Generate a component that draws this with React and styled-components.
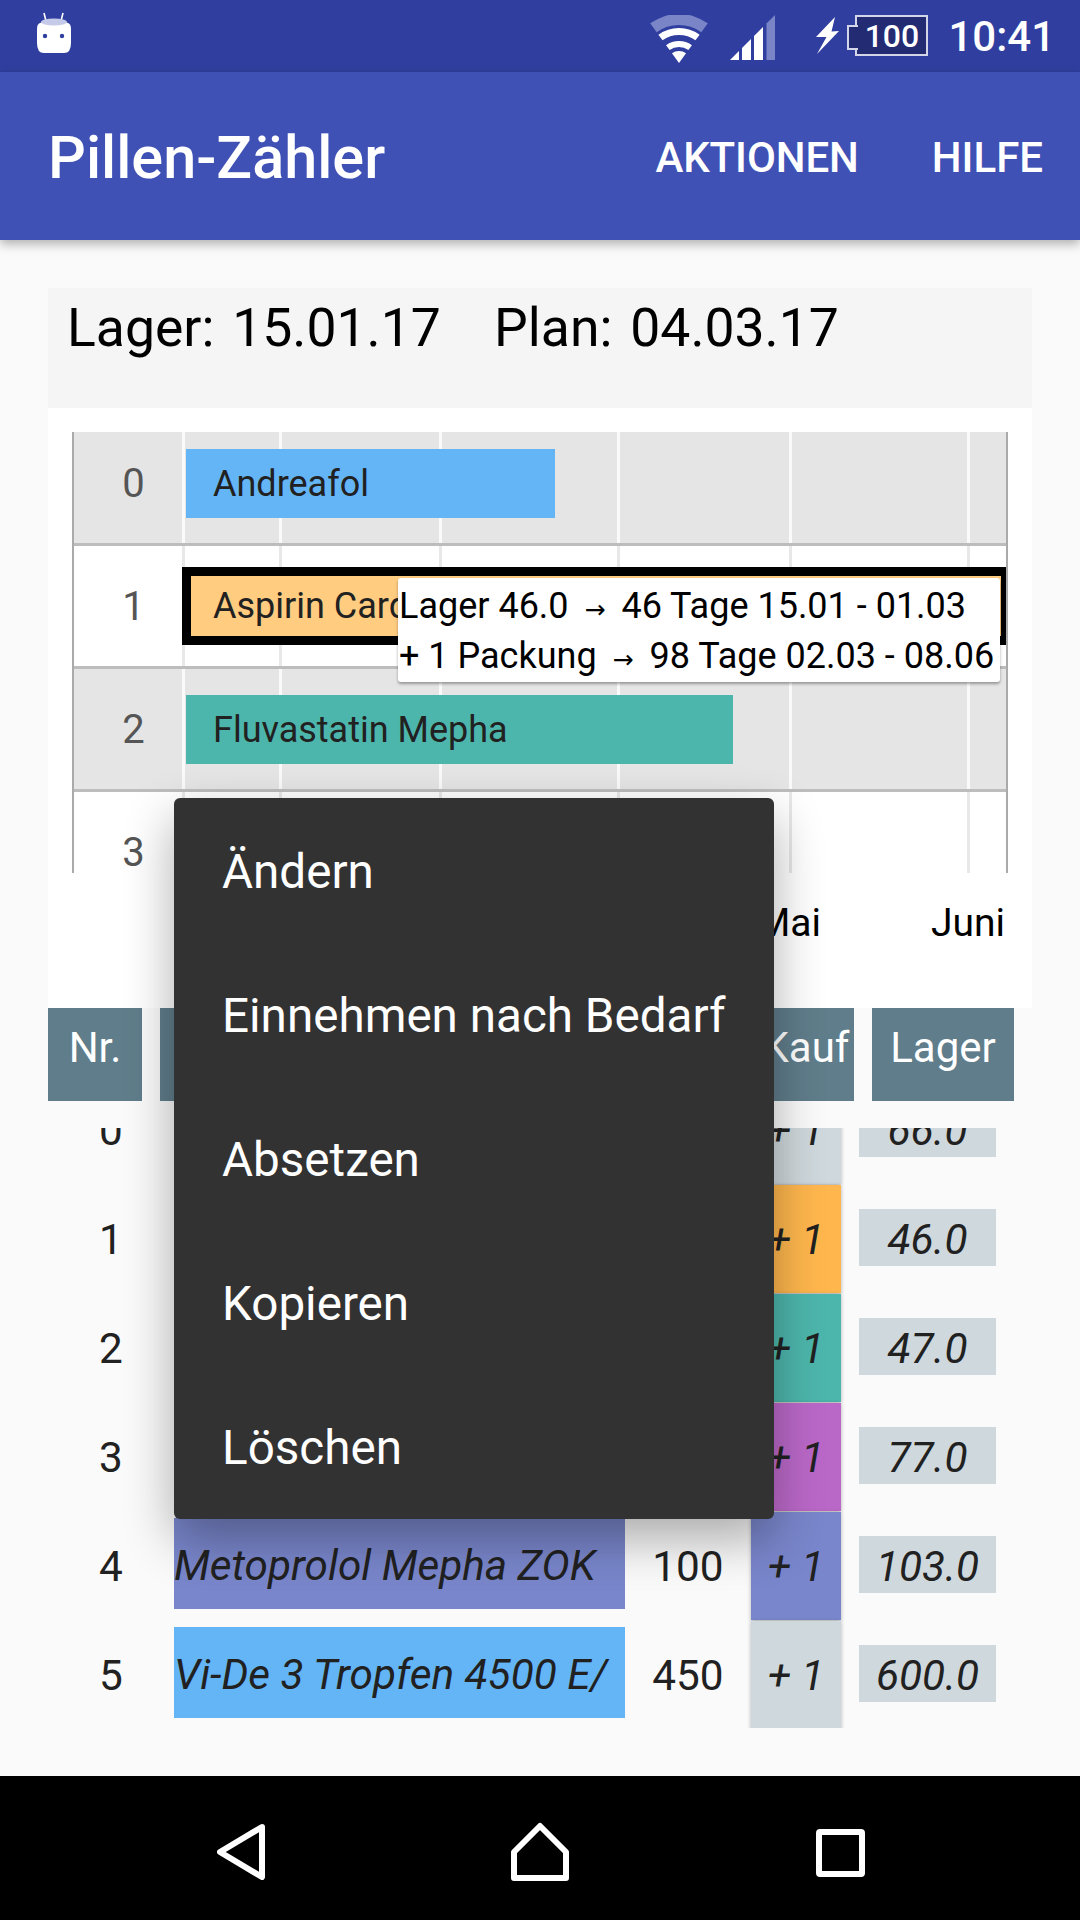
import React from "react";
import styled, { createGlobalStyle } from "styled-components";

const GlobalStyle = createGlobalStyle`
  html, body { margin: 0; padding: 0; background: #fafafa; }
  * { box-sizing: border-box; }
`;

const Page = styled.div`
  position: relative;
  width: 1080px;
  height: 1920px;
  overflow: hidden;
  display: flex;
  flex-direction: column;
  background: #fafafa;
  font-family: Roboto, "Liberation Sans", sans-serif;
  color: #212121;
`;

/* status bar */
const StatusBar = styled.div`
  flex: 0 0 72px;
  background: #303f9f;
  display: flex;
  align-items: flex-start;
  padding: 12px 25px 0 37px;
  color: #fff;
`;
const StatusSpacer = styled.div`flex: 1;`;
const RobotIcon = styled.svg`display: block; width: 34px; height: 41px;`;
const WifiIcon = styled.svg`display: block; width: 58px; height: 48px; margin-top: 3px;`;
const SignalIcon = styled.svg`display: block; width: 45px; height: 45px; margin: 3px 0 0 22px;`;
const BoltIcon = styled.svg`display: block; width: 24px; height: 37px; margin: 5px 0 0 41px;`;
const Battery = styled.div`
  position: relative;
  width: 73px;
  height: 41px;
  margin: 3px 0 0 15px;
  background: #232b73;
  border: 2px solid #d3d6e8;
  display: flex;
  align-items: center;
  justify-content: center;
  font-size: 32px;
  font-weight: 500;
  line-height: 1;
  padding-top: 1px;
  &::before {
    content: "";
    position: absolute;
    left: -10px;
    top: 8px;
    width: 9px;
    height: 21px;
    background: #232b73;
    border: 2px solid #d3d6e8;
    border-right: 0;
  }
`;
const Clock = styled.div`
  margin: 5px 0 0 20px;
  font-size: 42px;
  font-weight: 500;
  line-height: 40px;
`;

/* app bar */
const AppBar = styled.div`
  position: relative;
  z-index: 2;
  flex: 0 0 168px;
  background: #3f51b5;
  display: flex;
  align-items: center;
  padding: 5px 37px 0 48px;
  color: #fff;
  box-shadow: 0 4px 10px rgba(0, 0, 0, 0.3);
`;
const Title = styled.div`
  flex: 1;
  font-size: 59.4px;
  font-weight: 500;
  line-height: 1;
`;
const BarAction = styled.div`
  font-size: 42px;
  font-weight: 500;
  line-height: 1;
  margin: -2px 0 0 73px;
  letter-spacing: ${(p) => (p.$tight ? "-0.1px" : "0")};
`;

/* main */
const Main = styled.div`
  flex: 1;
  padding: 48px 48px 0;
  display: flex;
  flex-direction: column;
`;
const InfoPanel = styled.div`
  flex: 0 0 120px;
  background: #f5f5f5;
  padding: 5px 19px 0;
  font-size: 53.5px;
  word-spacing: 4.5px;
  line-height: 70px;
  color: #000;
  white-space: pre;
`;
const ChartPanel = styled.div`
  flex: 0 0 600px;
  background: #fff;
  padding: 24px 24px 0;
`;
const Canvas = styled.div`
  height: 441px;
  overflow: hidden;
  border-left: 2px solid #aaa;
  border-right: 2px solid #aaa;
`;
const gridX = [108, 205, 365, 543, 715, 893];
const gridLines = (color) =>
  gridX.map((x) => `linear-gradient(${color}, ${color}) ${x}px 0 / 3px 100% no-repeat`).join(", ");
const ChartRow = styled.div`
  height: 123px;
  display: grid;
  grid-template-columns: 112px 1fr;
  align-items: center;
  background: ${(p) => gridLines(p.$shaded ? "#fafafa" : "#e8e8e8")}, ${(p) => (p.$shaded ? "#e5e5e5" : "#fff")};
  border-bottom: 3px solid #bdbdbd;
  &:first-child { margin-top: -9px; }
`;
const ChartLabel = styled.div`
  padding-left: 7px;
  padding-top: 1px;
  text-align: center;
  font-size: 40px;
  color: #555;
`;
const Bar = styled.div`
  height: 69px;
  display: flex;
  align-items: center;
  padding: 1px 0 0 27px;
  font-size: 36px;
  background: ${(p) => p.$color};
  color: #212121;
  white-space: nowrap;
  overflow: hidden;
`;
const SelectedBar = styled.div`
  height: 78px;
  margin-left: -4px;
  padding: 9px 5px 9px 9px;
  background: #000;
`;
const SelectedFill = styled.div`
  height: 60px;
  display: flex;
  align-items: center;
  padding-left: 22px;
  font-size: 36px;
  background: ${(p) => p.$color};
  color: #212121;
  white-space: nowrap;
  overflow: hidden;
`;
const Axis = styled.div`
  display: flex;
  justify-content: flex-end;
  gap: 110px;
  padding: 27px 3px 0 0;
  font-size: 39px;
  line-height: 46px;
  color: #000;
`;

/* table */
const TableHead = styled.div`
  display: flex;
  gap: 18px;
  height: 93px;
`;
const HeadCell = styled.div`
  flex: 0 0 ${(p) => p.$w}px;
  background: #607d8b;
  color: #fff;
  font-size: 42px;
  display: flex;
  align-items: center;
  justify-content: center;
  padding-bottom: 14px;
  white-space: nowrap;
  overflow: hidden;
`;
const TableViewport = styled.div`
  height: 600px;
  margin: 27px 0 0 0;
  overflow: hidden;
`;
const TableRows = styled.div`
  margin-top: -53px;
`;
const TableRow = styled.div`
  height: 109px;
  display: grid;
  grid-template-columns: 126px 451px 126px 90px 137px;
  align-items: center;
  font-size: 42.3px;
`;
const NrCell = styled.div`
  text-align: center;
  padding-top: 2px;
`;
const NameCell = styled.div`
  height: 91px;
  margin-top: -4px;
  padding-top: 3px;
  display: flex;
  align-items: center;
  font-style: italic;
  white-space: nowrap;
  overflow: hidden;
  background: ${(p) => p.$color};
`;
const QtyCell = styled.div`
  text-align: center;
  padding-top: 2px;
`;
const KaufButton = styled.div`
  height: 108px;
  display: flex;
  align-items: center;
  justify-content: center;
  padding-top: 2px;
  font-style: italic;
  background: ${(p) => p.$color};
  box-shadow: 0 1px 4px rgba(0, 0, 0, 0.3);
`;
const StockCell = styled.div`
  height: 57px;
  margin: -2px 0 0 18px;
  padding-top: 4px;
  width: 137px;
  display: flex;
  align-items: center;
  justify-content: center;
  font-style: italic;
  background: #cfd8dc;
`;

/* nav bar */
const NavBar = styled.div`
  flex: 0 0 144px;
  background: #000;
  display: grid;
  grid-template-columns: 217px 48px 246px 58px 247px 49px;
  padding-top: 46px;
`;
const NavIcon = styled.svg`
  display: block;
  grid-column: ${(p) => p.$col};
  margin-top: ${(p) => p.$top || 0}px;
`;

/* overlays */
const Tooltip = styled.div`
  position: absolute;
  left: 398px;
  top: 578px;
  width: 602px;
  height: 104px;
  padding: 3px 0 0 1px;
  background: #fff;
  border-radius: 3px;
  box-shadow: 0 2px 3px rgba(0, 0, 0, 0.35);
  font-size: 36px;
  line-height: 50px;
  color: #000;
  white-space: pre;
`;
const Arrow = styled.span`
  font-family: "DejaVu Sans", sans-serif;
  font-size: 25px;
  line-height: 0;
  margin: 0 7px;
`;
const Menu = styled.div`
  position: absolute;
  left: 174px;
  top: 798px;
  width: 600px;
  height: 721px;
  background: #323232;
  border-radius: 6px;
  box-shadow: 0 20px 50px rgba(0, 0, 0, 0.32);
  color: #fff;
  display: flex;
  flex-direction: column;
`;
const MenuItem = styled.div`
  flex: 0 0 144px;
  display: flex;
  align-items: center;
  padding: 4px 0 0 48px;
  font-size: 47.6px;
`;

const wifiBand = (r1, r2) => {
  const a = (36 * Math.PI) / 180;
  const cx = 29, cy = 48;
  const sx = Math.sin(a), cy2 = Math.cos(a);
  const p = (r, s) => `${(cx + s * r * sx).toFixed(2)} ${(cy - r * cy2).toFixed(2)}`;
  if (r2 === 0) return `M${cx} ${cy} L${p(r1, -1)} A${r1} ${r1} 0 0 1 ${p(r1, 1)} Z`;
  return `M${p(r2, -1)} L${p(r1, -1)} A${r1} ${r1} 0 0 1 ${p(r1, 1)} L${p(r2, 1)} A${r2} ${r2} 0 0 0 ${p(r2, -1)} Z`;
};

const rows = [
  { nr: 0, name: "Andreafol", kauf: "#cfd8dc", name_c: "#64b5f6", stock: "66.0" },
  { nr: 1, name: "Aspirin Cardio", kauf: "#ffb74d", name_c: "#ffb74d", stock: "46.0" },
  { nr: 2, name: "Fluvastatin Mepha", kauf: "#4db6ac", name_c: "#4db6ac", stock: "47.0" },
  { nr: 3, name: "", kauf: "#ba68c8", name_c: "#ba68c8", stock: "77.0" },
  { nr: 4, name: "Metoprolol Mepha ZOK", qty: "100", kauf: "#7986cb", name_c: "#7986cb", stock: "103.0" },
  { nr: 5, name: "Vi-De 3 Tropfen 4500 E/", qty: "450", kauf: "#cfd8dc", name_c: "#64b5f6", stock: "600.0" },
];

export default function App() {
  return (
    <Page>
      <GlobalStyle />
      <StatusBar>
        <RobotIcon viewBox="0 0 34 41">
          <path d="M7 1 L9 9 M26 1 L24 9" stroke="#fff" strokeWidth="1.6" fill="none" />
          <path d="M3 11 Q17 4 31 11 Q34 12 34 17 L34 31 Q34 41 27 41 L7 41 Q0 41 0 31 L0 17 Q0 12 3 11 Z" fill="#fff" />
          <ellipse cx="17" cy="10" rx="13" ry="3.5" fill="#c5cae9" />
          <circle cx="8" cy="24" r="2.2" fill="#303f9f" />
          <circle cx="25" cy="24" r="2.2" fill="#303f9f" />
        </RobotIcon>
        <StatusSpacer />
        <WifiIcon viewBox="0 0 58 48">
          <path d={wifiBand(49, 38)} fill="#7985c6" />
          <path d={wifiBand(35, 28)} fill="#fff" />
          <path d={wifiBand(22, 16)} fill="#fff" />
          <path d={wifiBand(12, 0)} fill="#fff" />
        </WifiIcon>
        <SignalIcon viewBox="0 0 45 45">
          <polygon points="0,45 9,36 9,45" fill="#fff" />
          <polygon points="12,45 12,33 21,24 21,45" fill="#fff" />
          <polygon points="24,45 24,21 33,12 33,45" fill="#fff" />
          <polygon points="36.5,45 36.5,8.5 45,0 45,45" fill="#7985c6" />
        </SignalIcon>
        <BoltIcon viewBox="0 0 24 37">
          <polygon points="19,0 0,20 10.5,20 1,37 23,14 15.5,14.5" fill="#fff" />
        </BoltIcon>
        <Battery>100</Battery>
        <Clock>10:41</Clock>
      </StatusBar>
      <AppBar>
        <Title>Pillen-Zähler</Title>
        <BarAction $tight>AKTIONEN</BarAction>
        <BarAction>HILFE</BarAction>
      </AppBar>
      <Main>
        <InfoPanel>{"Lager: 15.01.17   Plan: 04.03.17"}</InfoPanel>
        <ChartPanel>
          <Canvas>
            <ChartRow $shaded>
              <ChartLabel>0</ChartLabel>
              <Bar $color="#64b5f6" style={{ width: 369 }}>Andreafol</Bar>
            </ChartRow>
            <ChartRow>
              <ChartLabel>1</ChartLabel>
              <SelectedBar>
                <SelectedFill $color="#ffcc80">Aspirin Cardio</SelectedFill>
              </SelectedBar>
            </ChartRow>
            <ChartRow $shaded>
              <ChartLabel>2</ChartLabel>
              <Bar $color="#4db6ac" style={{ width: 547 }}>Fluvastatin Mepha</Bar>
            </ChartRow>
            <ChartRow>
              <ChartLabel>3</ChartLabel>
            </ChartRow>
          </Canvas>
          <Axis>
            <span>Mai</span>
            <span>Juni</span>
          </Axis>
        </ChartPanel>
        <TableHead>
          <HeadCell $w={94}>Nr.</HeadCell>
          <HeadCell $w={580} />
          <HeadCell $w={96}>Kauf</HeadCell>
          <HeadCell $w={142}>Lager</HeadCell>
        </TableHead>
        <TableViewport>
          <TableRows>
            {rows.map((r) => (
              <TableRow key={r.nr}>
                <NrCell>{r.nr}</NrCell>
                <NameCell $color={r.name_c}>{r.name}</NameCell>
                <QtyCell>{r.qty}</QtyCell>
                <KaufButton $color={r.kauf}>+ 1</KaufButton>
                <StockCell>{r.stock}</StockCell>
              </TableRow>
            ))}
          </TableRows>
        </TableViewport>
      </Main>
      <NavBar>
        <NavIcon $col={2} $top={2} width="48" height="56" viewBox="0 0 48 56">
          <path d="M45 3 L3 28 L45 53 Z" fill="none" stroke="#fff" strokeWidth="6" strokeLinejoin="round" />
        </NavIcon>
        <NavIcon $col={4} width="58" height="59" viewBox="0 0 58 59">
          <path d="M29 4 L55 30 L55 56 L3 56 L3 30 Z" fill="none" stroke="#fff" strokeWidth="6" strokeLinejoin="round" />
        </NavIcon>
        <NavIcon $col={6} $top={7} width="49" height="48" viewBox="0 0 49 48">
          <rect x="3" y="3" width="43" height="42" rx="1" fill="none" stroke="#fff" strokeWidth="6" />
        </NavIcon>
      </NavBar>
      <Tooltip>
        {"Lager 46.0 "}<Arrow>→</Arrow>{" 46 Tage 15.01 - 01.03\n+ 1 Packung "}<Arrow>→</Arrow>{" 98 Tage 02.03 - 08.06"}
      </Tooltip>
      <Menu>
        <MenuItem>Ändern</MenuItem>
        <MenuItem>Einnehmen nach Bedarf</MenuItem>
        <MenuItem>Absetzen</MenuItem>
        <MenuItem>Kopieren</MenuItem>
        <MenuItem>Löschen</MenuItem>
      </Menu>
    </Page>
  );
}
